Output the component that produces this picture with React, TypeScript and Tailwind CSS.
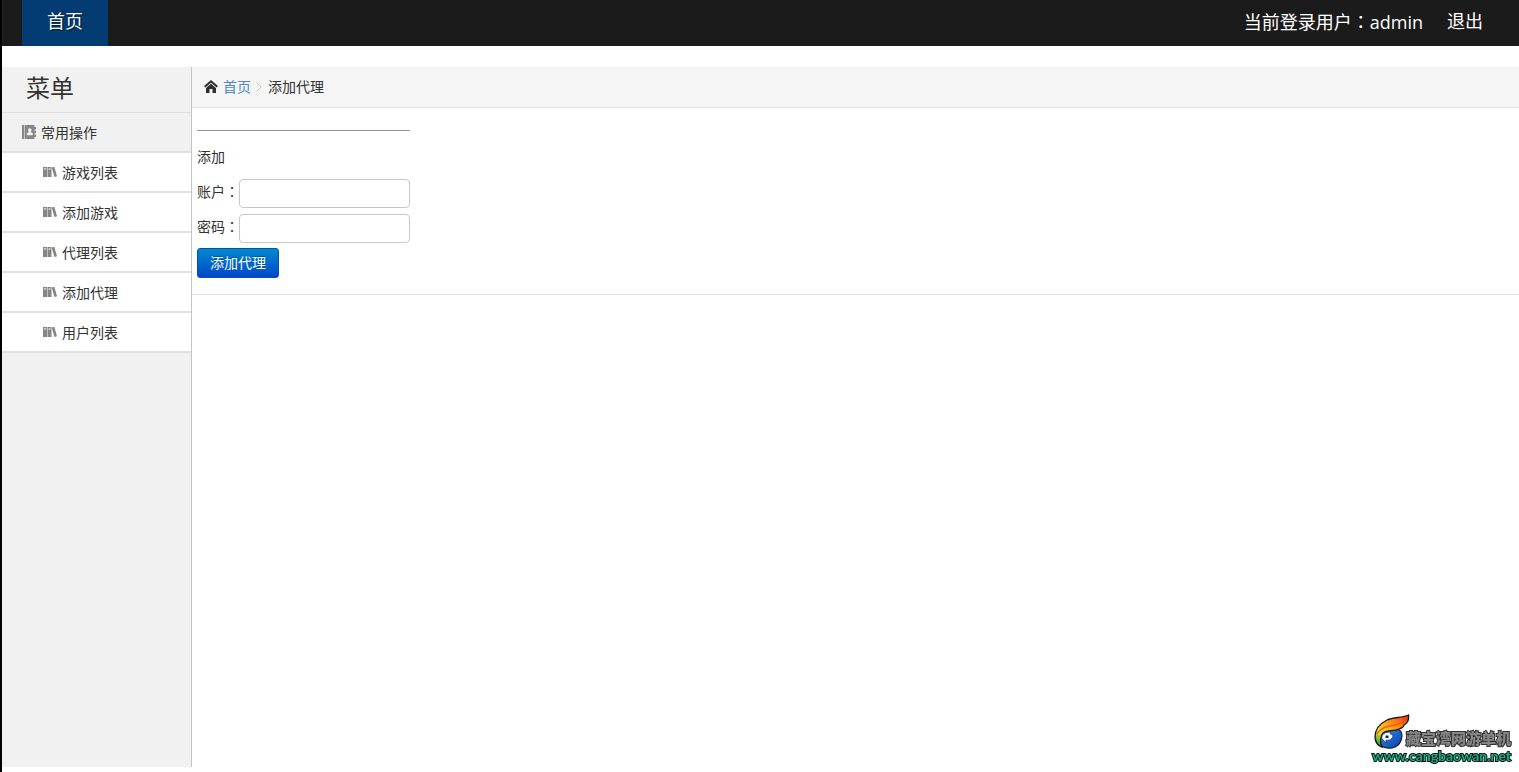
import React from "react";

const menuItems = ["游戏列表", "添加游戏", "代理列表", "添加代理", "用户列表"];

function HomeIcon() {
  return (
    <svg viewBox="0 0 14 14" className="h-3.5 w-3.5 shrink-0" fill="#2f2f2f" aria-hidden="true">
      <path d="M7 0 0 6.1 1.3 7.6 7 2.7 12.7 7.600 14 6.100Z" />
      <path d="M7 3.700 2 8V13H5.500V9H8.500V13H12V8Z" />
    </svg>
  );
}

function AddressBookIcon() {
  return (
    <svg viewBox="0 0 14 14" className="h-3.5 w-3.5 shrink-0" fill="#878787" aria-hidden="true">
      <path d="M0 0H2.200V14H0Z" />
      <path
        fillRule="evenodd"
        d="M2.700 0H12.4V2H14V4.4H12.4V5.8H14V8.2H12.4V9.6H14V12H12.4V14H2.700ZM7.8 3.2a1.8 1.8 0 0 0-1.1 3.2v.9L4.9 8.3V10.2H10.7V8.3L8.9 7.3V6.4A1.8 1.8 0 0 0 7.8 3.2Z"
      />
    </svg>
  );
}

function BooksIcon() {
  return (
    <svg viewBox="0 0 14 12" className="h-3 w-3.5 shrink-0" fill="#858585" aria-hidden="true">
      <path
        fillRule="evenodd"
        d="M0 1H4.200V11H0ZM.9 2.6V3.4H3.3V2.6ZM4.700 1H8.500V11H4.700ZM5.600 2.6V3.4H7.600V2.6Z"
      />
      <path d="M8.700 1.5 11.300 .8 14 10.300 11.400 11.100Z" />
    </svg>
  );
}

function FlameLogo() {
  return (
    <svg viewBox="0 0 36 36" className="h-9 w-9" aria-hidden="true">
      <defs>
        <linearGradient id="flame" x1="0" y1="1" x2="1" y2="0">
          <stop offset="0.1" stopColor="#3c9f3a" />
          <stop offset="0.3" stopColor="#f2e02a" />
          <stop offset="0.5" stopColor="#ffac14" />
          <stop offset="0.72" stopColor="#ff7a10" />
          <stop offset="1" stopColor="#e5290e" />
        </linearGradient>
        <linearGradient id="orb" x1="0" y1="0" x2="1" y2="1">
          <stop offset="0" stopColor="#49a9ef" />
          <stop offset="0.5" stopColor="#1c68d0" />
          <stop offset="1" stopColor="#123c98" />
        </linearGradient>
      </defs>
      <path
        d="M24 15C30 18 29 29 21 33C14 36 6 33 4 28L6 18Z"
        fill="url(#orb)"
        stroke="#111c33"
        strokeWidth="1.2"
      />
      <path
        d="M34.500 1C28 4 20 3 13 6C5 10 1 16 1 23C1 28 4 32 8 33C6 28 6 22 9 19C14 15 20 18 25 15C28 14 30 12 30 11C34 9 35 5 34.500 1Z"
        fill="url(#flame)"
        stroke="#171717"
        strokeWidth="1.3"
      />
      <path d="M3 20C9 9 22 14 31 7" fill="none" stroke="#e65a12" strokeWidth="1.300" />
      <path
        d="M8 25C7 20 11 18 17 18C15 19 16 20 19 21C19 25 15 27 12 26L12 29Z"
        fill="#fff"
        stroke="#173565"
        strokeWidth="0.8"
      />
      <path d="M11.500 21.500H14.500V24H11.500Z" fill="#12294f" />
    </svg>
  );
}

function Colon() {
  return <span className="font-['Noto_Sans_CJK_TC',sans-serif]">：</span>;
}

function Field({ id, label, type }: { id: string; label: string; type: string }) {
  return (
    <div className="mb-1.5 flex h-[29px] items-center">
      <label htmlFor={id} className="-mt-1 w-[42px] shrink-0 whitespace-nowrap">
        {label}
        <Colon />
      </label>
      <input
        id={id}
        type={type}
        className="h-[29px] min-w-0 flex-1 rounded border border-[#c8c8c8] bg-white px-1.5 outline-none focus:border-sky-500"
      />
    </div>
  );
}

export default function App() {
  return (
    <div className="flex min-h-screen flex-col border-l-2 border-black bg-white pb-[5px] font-['Noto_Sans','Noto_Sans_CJK_SC',sans-serif] text-sm leading-5 text-[#333]">
      <header className="flex h-[46px] items-stretch justify-between bg-[#1b1b1b] pl-5 pr-9 text-lg text-white">
        <nav className="flex">
          <a
            href="#home"
            className="flex items-center bg-[#033c73] px-[25px] pb-1 [text-shadow:1px_1px_1px_rgba(0,0,0,0.6)]"
          >
            首页
          </a>
        </nav>
        <div className="flex items-center gap-6 pb-1">
          <span>
            当前登录用户
            <Colon />
            <span className="font-['Open_Sans',sans-serif]">admin</span>
          </span>
          <a href="#logout">退出</a>
        </div>
      </header>

      <div className="mt-[21px] flex flex-1">
        <aside className="w-[190px] shrink-0 border-r border-[#c4c4c4] bg-[#f1f1f1]">
          <h1 className="flex h-[46px] items-center border-b border-[#dfdfdf] px-6 pb-1 text-2xl">
            菜单
          </h1>
          <div className="flex h-10 items-center gap-[5px] border-b-2 border-[#e2e2e2] pl-5">
            <AddressBookIcon />
            <span className="pt-0.5">常用操作</span>
          </div>
          <ul>
            {menuItems.map((item) => (
              <li key={item} className="border-b-2 border-[#e2e2e2] bg-white">
                <a href="#menu" className="flex h-[38px] items-center gap-[5px] pl-[41px]">
                  <BooksIcon />
                  <span className="pt-0.5">{item}</span>
                </a>
              </li>
            ))}
          </ul>
        </aside>

        <main className="min-w-0 flex-1">
          <nav
            aria-label="当前位置"
            className="flex h-[41px] items-center border-b border-[#e2e2e2] bg-[#f5f5f5] pl-3"
          >
            <HomeIcon />
            <a href="#home" className="ml-[5px] text-[#4f88c6]">
              首页
            </a>
            <svg
              viewBox="0 0 6 12"
              className="ml-[5px] mr-1.5 h-3 w-1.5"
              fill="none"
              stroke="#c4c4c4"
              aria-hidden="true"
            >
              <path d="M.5 1.500 5 6 .5 10.500" />
            </svg>
            <span>添加代理</span>
          </nav>
          <section className="border-b border-[#e2e2e2] px-[5px] pb-4 pt-[22px]">
            <form className="w-[213px]" onSubmit={(event) => event.preventDefault()}>
              <hr className="border-[#969696]" />
              <h2 className="mb-3 mt-4">添加</h2>
              <Field id="account" label="账户" type="text" />
              <Field id="password" label="密码" type="password" />
              <button
                type="submit"
                className="-mt-px h-[30px] rounded-[3px] border border-[#074fae] bg-linear-to-b from-[#0788cc] to-[#0044cc] px-3 text-white [text-shadow:0_-1px_0_rgba(0,0,0,0.25)]"
              >
                添加代理
              </button>
            </form>
          </section>
        </main>
      </div>

      <div className="fixed bottom-2 right-2 flex flex-col items-end">
        <div className="flex items-end">
          <FlameLogo />
          <span className="-ml-1 whitespace-nowrap text-[15px] font-black leading-6 text-[#858585] [-webkit-text-stroke:2px_#333] [paint-order:stroke_fill]">
            藏宝湾网游单机
          </span>
        </div>
        <span className="-mt-0.5 font-[Lato,sans-serif] text-sm font-bold leading-4 text-[#0fb184] [-webkit-text-stroke:2px_#111] [paint-order:stroke_fill]">
          www.cangbaowan.net
        </span>
      </div>
    </div>
  );
}
